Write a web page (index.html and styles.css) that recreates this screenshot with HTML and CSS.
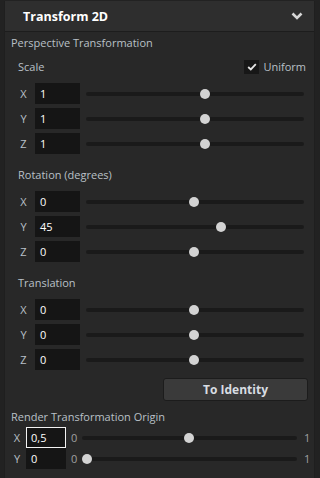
FILE: index.html
```html
<!DOCTYPE html>
<html lang="en">
  <head>
    <title>Transform 2D</title>
    <meta charset="utf-8" />
    <meta name="viewport" content="width=device-width, initial-scale=1" />

    <link rel="stylesheet" href="styles.css">
  </head>

  <body>
    <div class="panel">
      <div class="header">
        <span class="title">Transform 2D</span>
        <svg class="chevron" width="12" height="8" viewBox="0 0 12 8">
          <path d="M1.5 1.5 L6 6 L10.5 1.5" fill="none" stroke="#d6d6d6" stroke-width="2.6" />
        </svg>
      </div>

      <div class="content">
        <div class="group-title">Perspective Transformation</div>

        <div class="section">
          <div class="section-head">
            <span>Scale</span>
            <label class="check">
              <span class="box">
                <svg width="10" height="8" viewBox="0 0 10 8">
                  <path d="M1.2 4 L3.8 6.4 L8.8 1.2" fill="none" stroke="#e6e6e6" stroke-width="1.8" />
                </svg>
              </span>
              Uniform
            </label>
          </div>
          <div class="row">
            <span class="axis">X</span>
            <div class="field">1</div>
            <div class="track"><span class="thumb" style="left: 54.6%"></span></div>
          </div>
          <div class="row">
            <span class="axis">Y</span>
            <div class="field">1</div>
            <div class="track"><span class="thumb" style="left: 54.6%"></span></div>
          </div>
          <div class="row">
            <span class="axis">Z</span>
            <div class="field">1</div>
            <div class="track"><span class="thumb" style="left: 54.6%"></span></div>
          </div>
        </div>

        <div class="section">
          <div class="section-head"><span>Rotation (degrees)</span></div>
          <div class="row">
            <span class="axis">X</span>
            <div class="field">0</div>
            <div class="track"><span class="thumb" style="left: 49.5%"></span></div>
          </div>
          <div class="row">
            <span class="axis">Y</span>
            <div class="field">45</div>
            <div class="track"><span class="thumb" style="left: 61.9%"></span></div>
          </div>
          <div class="row">
            <span class="axis">Z</span>
            <div class="field">0</div>
            <div class="track"><span class="thumb" style="left: 49.5%"></span></div>
          </div>
        </div>

        <div class="section">
          <div class="section-head"><span>Translation</span></div>
          <div class="row">
            <span class="axis">X</span>
            <div class="field">0</div>
            <div class="track"><span class="thumb" style="left: 49.5%"></span></div>
          </div>
          <div class="row">
            <span class="axis">Y</span>
            <div class="field">0</div>
            <div class="track"><span class="thumb" style="left: 49.5%"></span></div>
          </div>
          <div class="row">
            <span class="axis">Z</span>
            <div class="field">0</div>
            <div class="track"><span class="thumb" style="left: 49.5%"></span></div>
          </div>
        </div>

        <div class="actions">
          <button class="btn">To Identity</button>
        </div>

        <div class="group-title origin-title">Render Transformation Origin</div>
        <div class="origin">
          <div class="origin-row">
            <span class="axis">X</span>
            <div class="field focused">0,5</div>
            <span class="limit">0</span>
            <div class="track"><span class="thumb" style="left: 49.8%"></span></div>
            <span class="limit max">1</span>
          </div>
          <div class="origin-row">
            <span class="axis">Y</span>
            <div class="field">0</div>
            <span class="limit">0</span>
            <div class="track"><span class="thumb" style="left: 2.3%"></span></div>
            <span class="limit max">1</span>
          </div>
        </div>
      </div>
    </div>
  </body>
</html>
```

FILE: styles.css
```css
body {
  margin: 0;
  background: #222222;
  font-family: "Open Sans", "Noto Sans", sans-serif;
  font-size: 11px;
  color: #b9c0c7;
}

.panel {
  margin: 0 5px 0 4px;
  height: 478px;
  background: #282828;
  border-left: 1px solid #1f1f1f;
  border-right: 1px solid #1f1f1f;
}

.header {
  display: flex;
  align-items: center;
  justify-content: space-between;
  height: 30px;
  margin-top: 1px;
  padding: 0 11px 0 18px;
  background: #2e2e2e;
  border-bottom: 1px solid #1d1d1d;
}

.title {
  color: #ffffff;
  font-weight: bold;
  font-size: 12.5px;
}

.content {
  padding: 3px 10px 0 6px;
}

.group-title {
  line-height: 16px;
  height: 16px;
}

.section {
  padding-left: 7px;
  margin-top: 8px;
}

.section + .section {
  margin-top: 13px;
}

.section-head {
  display: flex;
  justify-content: space-between;
  align-items: center;
  height: 16px;
  line-height: 16px;
  margin-bottom: 8px;
}

.check {
  display: flex;
  align-items: center;
  gap: 4px;
  margin-right: -2px;
}

.box {
  display: flex;
  align-items: center;
  justify-content: center;
  width: 15px;
  height: 14px;
  background: #171717;
}

.row {
  display: grid;
  grid-template-columns: 11px 45px 1fr;
  align-items: center;
  column-gap: 6px;
  height: 21px;
  margin-bottom: 4px;
}

.axis {
  text-align: center;
}

.field {
  height: 21px;
  line-height: 21px;
  padding-left: 5px;
  background: #151515;
  color: #ffffff;
  box-sizing: border-box;
}

.track {
  position: relative;
  height: 4px;
  border-radius: 2px;
  background: #1a1a1a;
}

.thumb {
  position: absolute;
  top: -3px;
  width: 10px;
  height: 10px;
  margin-left: -5px;
  border-radius: 50%;
  background: #d3d3d3;
}

.actions {
  display: flex;
  justify-content: flex-end;
  margin: 8px -4px 0 0;
}

.btn {
  width: 145px;
  height: 23px;
  background: #3a3a3a;
  border: 1px solid #1c1c1c;
  border-radius: 3px;
  color: #d8dde2;
  font-family: inherit;
  font-size: 12px;
  font-weight: bold;
}

.origin-title {
  margin-top: 8px;
}

.origin {
  margin: 2px -4px 0 0;
}

.origin-row {
  display: flex;
  align-items: center;
  height: 21px;
}

.origin-row .axis {
  width: 12px;
  margin-right: 3px;
}

.origin-row .field {
  width: 40px;
}

.focused {
  border: 1px solid #f2f2f2;
  padding-left: 4px;
  line-height: 19px;
}

.limit {
  width: 7px;
  margin-left: 5px;
  color: #a0a0a0;
}

.origin-row .track {
  flex: 1;
  margin-left: 4px;
}

.limit.max {
  width: 4px;
  margin-left: 7px;
}
```
